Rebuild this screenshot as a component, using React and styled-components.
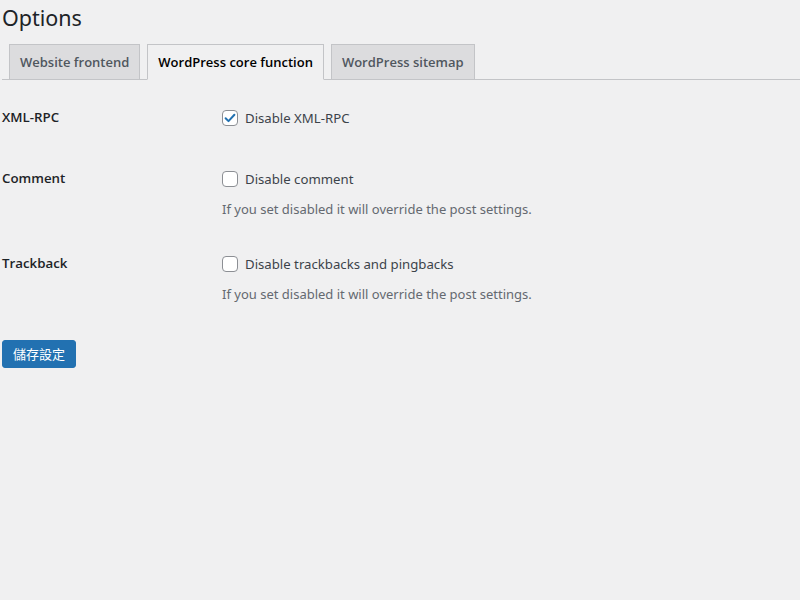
import React, { useState } from "react";
import styled, { createGlobalStyle } from "styled-components";

const GlobalStyle = createGlobalStyle`
  html, body {
    margin: 0;
    background: #f0f0f1;
  }
  body {
    font-family: "Noto Sans", "Noto Sans CJK TC", sans-serif;
    font-size: 13px;
    color: #3c434a;
  }
`;

const semibold = `"Open Sans", "Noto Sans", sans-serif`;

const Wrap = styled.div`
  padding: 0 0 0 2px;
`;

const Title = styled.h1`
  margin: 0;
  font-size: 21.5px;
  font-weight: 400;
  line-height: 36px;
  color: #1d2327;
`;

const TabBar = styled.nav`
  display: flex;
  margin-top: 8px;
  border-bottom: 1px solid #c3c4c7;
`;

const Tab = styled.a`
  display: block;
  margin-left: 7px;
  margin-bottom: -1px;
  padding: 5px 10px;
  font-family: ${semibold};
  font-size: 13px;
  font-weight: 600;
  line-height: 24px;
  text-decoration: none;
  white-space: nowrap;
  cursor: pointer;
  border: 1px solid #c3c4c7;
  background: ${p => (p.$active ? "#f0f0f1" : "#dcdcde")};
  color: ${p => (p.$active ? "#000" : "#50575e")};
  border-bottom-color: ${p => (p.$active ? "#f0f0f1" : "#c3c4c7")};
`;

const Form = styled.form`
  margin-top: 7px;
`;

const Row = styled.div`
  display: grid;
  grid-template-columns: 220px 1fr;
`;

const RowLabel = styled.div`
  padding: 20px 0 21px;
  line-height: 20px;
  font-family: ${semibold};
  font-size: 13.3px;
  font-weight: 600;
  color: #1d2327;
`;

const Field = styled.div`
  padding: 19px 0 12px;
`;

const CheckLine = styled.label`
  display: flex;
  align-items: center;
  gap: 7px;
  height: 24px;
  font-size: 13.2px;
  color: #3c434a;
  cursor: pointer;
`;

const Box = styled.span`
  box-sizing: border-box;
  width: 16px;
  height: 16px;
  border: 1px solid #8c8f94;
  border-radius: 4px;
  background: #fff;
  display: flex;
  align-items: center;
  justify-content: center;
`;

const Description = styled.p`
  margin: 6px 0 0;
  line-height: 24px;
  font-size: 13px;
  color: #646970;
`;

const SaveButton = styled.button`
  margin-top: 22px;
  height: 28px;
  padding: 0 10px;
  border: 1px solid #2271b1;
  border-radius: 3px;
  background: #2271b1;
  color: #fff;
  font-family: "Noto Sans CJK TC", sans-serif;
  font-size: 13px;
  line-height: 26px;
  cursor: pointer;
`;

const Checkbox = ({ checked, onChange, children }) => (
  <CheckLine onClick={onChange}>
    <Box>
      {checked && (
        <svg width="14" height="14" viewBox="0 0 14 14">
          <path
            d="M2.6 7.2l2.9 2.9 5.9-6.4"
            fill="none"
            stroke="#2271b1"
            strokeWidth="2"
            strokeLinecap="round"
            strokeLinejoin="round"
          />
        </svg>
      )}
    </Box>
    {children}
  </CheckLine>
);

const tabs = ["Website frontend", "WordPress core function", "WordPress sitemap"];

export default function App() {
  const [tab, setTab] = useState(1);
  const [opts, setOpts] = useState({ xmlrpc: true, comment: false, trackback: false });
  const toggle = key => setOpts(o => ({ ...o, [key]: !o[key] }));

  return (
    <Wrap>
      <GlobalStyle />
      <Title>Options</Title>
      <TabBar>
        {tabs.map((t, i) => (
          <Tab key={t} $active={i === tab} onClick={() => setTab(i)}>
            {t}
          </Tab>
        ))}
      </TabBar>
      <Form onSubmit={e => e.preventDefault()}>
        <Row>
          <RowLabel>XML-RPC</RowLabel>
          <Field>
            <Checkbox checked={opts.xmlrpc} onChange={() => toggle("xmlrpc")}>
              Disable XML-RPC
            </Checkbox>
          </Field>
        </Row>
        <Row>
          <RowLabel>Comment</RowLabel>
          <Field>
            <Checkbox checked={opts.comment} onChange={() => toggle("comment")}>
              Disable comment
            </Checkbox>
            <Description>If you set disabled it will override the post settings.</Description>
          </Field>
        </Row>
        <Row>
          <RowLabel>Trackback</RowLabel>
          <Field>
            <Checkbox checked={opts.trackback} onChange={() => toggle("trackback")}>
              Disable trackbacks and pingbacks
            </Checkbox>
            <Description>If you set disabled it will override the post settings.</Description>
          </Field>
        </Row>
        <SaveButton type="submit">儲存設定</SaveButton>
      </Form>
    </Wrap>
  );
}
